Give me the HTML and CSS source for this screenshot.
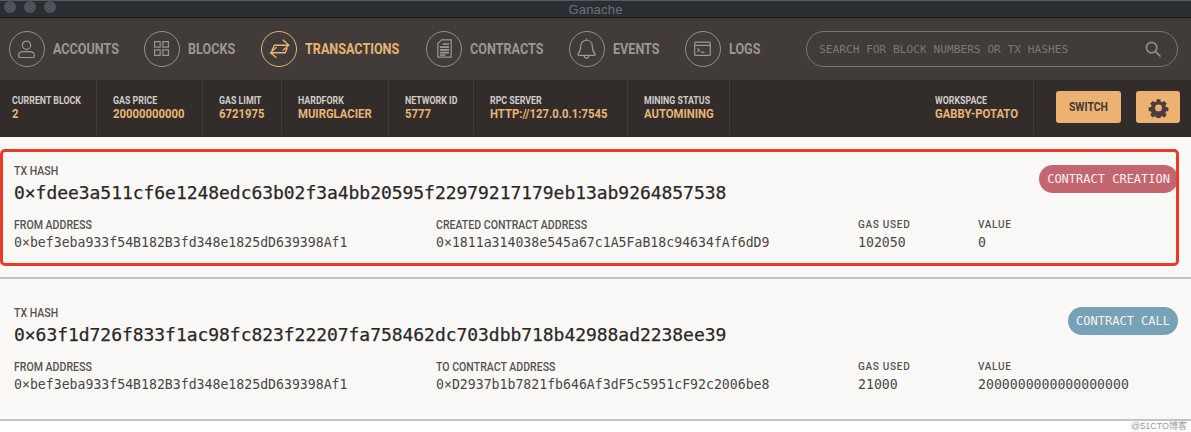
FILE: index.html
```html
<!DOCTYPE html>
<html lang="en">
<head>
<meta charset="utf-8">
<title>Ganache</title>
<link rel="stylesheet" href="styles.css">
</head>
<body>
<header class="titlebar">
  <div class="lights"><i></i><i></i><i></i></div>
  <div class="title">Ganache</div>
</header>
<nav class="nav">
  <a class="tab tab-accounts"><span class="ring"><svg viewBox="0 0 36 36"><circle cx="18" cy="14.400" r="4.500"/><path d="M9.500 26.500v-1.500c0-2.500 2.500-3.500 5-3.500h7c2.500 0 5 1 5 3.500v1.500c0 .8-.5 1.300-1.200 1.300H10.700c-.7 0-1.200-.5-1.200-1.300z"/></svg></span><span class="tab-text">ACCOUNTS</span></a>
  <a class="tab tab-blocks"><span class="ring"><svg viewBox="0 0 36 36"><rect x="10.500" y="10.500" width="6" height="6"/><rect x="19.500" y="10.500" width="6" height="6"/><rect x="10.500" y="19.500" width="6" height="6"/><rect x="19.500" y="19.500" width="6" height="6"/></svg></span><span class="tab-text">BLOCKS</span></a>
  <a class="tab tab-tx active"><span class="ring"><svg viewBox="0 0 36 36"><path d="M10.700 20.200l2.900-5.800h15.600M22.700 8.500l6.500 5.900-6.500 5.800M27.500 17.200l-2.200 5.500h-16M15.800 16.500l-6.500 6.200 6.500 5.500"/></svg></span><span class="tab-text">TRANSACTIONS</span></a>
  <a class="tab tab-contracts"><span class="ring"><svg viewBox="0 0 36 36"><path d="M16 8.500h10.400v19H11.800V12.500z"/><path class="doc-lines" d="M17 13h7M14 16.500h10M14 19.500h10M14 22.500h10M14 25h6"/></svg></span><span class="tab-text">CONTRACTS</span></a>
  <a class="tab tab-events"><span class="ring"><svg viewBox="0 0 36 36"><path d="M18 9c-4 0-6.300 3-6.300 6.500 0 4.500-1 6.500-3 8.500-.5.700 0 1.500.8 1.500h17c.8 0 1.300-.8.800-1.500-2-2-3-4-3-8.500C24.300 12 22 9 18 9zM18 9V7M15.500 26c0 1.500 1 2.500 2.500 2.500s2.500-1 2.500-2.500"/></svg></span><span class="tab-text">EVENTS</span></a>
  <a class="tab tab-logs"><span class="ring"><svg viewBox="0 0 36 36"><rect x="9.500" y="11" width="17" height="14.500" rx="1"/><path d="M9.500 14.500h17M12.500 18l2.200 1.800-2.200 1.800M16 22h4"/></svg></span><span class="tab-text">LOGS</span></a>
  <div class="search">
    <span>SEARCH FOR BLOCK NUMBERS OR TX HASHES</span>
    <svg viewBox="0 0 18 18"><circle cx="7" cy="7" r="5.500"/><path d="M11 11l5.500 5.500"/></svg>
  </div>
</nav>
<section class="status">
  <div class="cell cell-first"><label>CURRENT BLOCK</label><b>2</b></div>
  <div class="cell"><label>GAS PRICE</label><b>20000000000</b></div>
  <div class="cell"><label>GAS LIMIT</label><b>6721975</b></div>
  <div class="cell"><label>HARDFORK</label><b>MUIRGLACIER</b></div>
  <div class="cell"><label>NETWORK ID</label><b>5777</b></div>
  <div class="cell"><label>RPC SERVER</label><b>HTTP://127.0.0.1:7545</b></div>
  <div class="cell"><label>MINING STATUS</label><b>AUTOMINING</b></div>
  <div class="cell cell-work"><label>WORKSPACE</label><b>GABBY-POTATO</b></div>
  <div class="actions">
    <button class="btn btn-switch"><span class="btn-text">SWITCH</span></button>
    <button class="btn btn-gear"><svg viewBox="0 0 24 24"><path fill-rule="evenodd" d="M10 2.500h4l.6 2.800 1.500.7 2.500-1.500 2.800 2.800-1.500 2.500.6 1.500 2.800.7v4l-2.800.6-.6 1.500 1.500 2.500-2.800 2.800-2.500-1.500-1.500.6-.6 2.800h-4l-.6-2.800-1.500-.6-2.500 1.500-2.800-2.800 1.500-2.500-.6-1.500-2.800-.6v-4l2.800-.7.6-1.500-1.500-2.500 2.800-2.800 2.500 1.500 1.500-.7zM12 8.600a3.900 3.900 0 1 0 0 7.800 3.900 3.900 0 0 0 0-7.800z"/></svg></button>
  </div>
</section>
<main>
  <article class="tx tx-marked">
    <div class="mark"></div>
    <div class="tx-head">
      <div><label>TX HASH</label><div class="hash">0×fdee3a511cf6e1248edc63b02f3a4bb20595f22979217179eb13ab9264857538</div></div>
      <span class="badge badge-create">CONTRACT CREATION</span>
    </div>
    <div class="tx-grid">
      <div><label>FROM ADDRESS</label><div class="val">0×bef3eba933f54B182B3fd348e1825dD639398Af1</div></div>
      <div><label>CREATED CONTRACT ADDRESS</label><div class="val">0×1811a314038e545a67c1A5FaB18c94634fAf6dD9</div></div>
      <div><label class="mono">GAS USED</label><div class="val">102050</div></div>
      <div><label class="mono">VALUE</label><div class="val">0</div></div>
    </div>
  </article>
  <article class="tx">
    <div class="tx-head">
      <div><label>TX HASH</label><div class="hash">0×63f1d726f833f1ac98fc823f22207fa758462dc703dbb718b42988ad2238ee39</div></div>
      <span class="badge badge-call">CONTRACT CALL</span>
    </div>
    <div class="tx-grid">
      <div><label>FROM ADDRESS</label><div class="val">0×bef3eba933f54B182B3fd348e1825dD639398Af1</div></div>
      <div><label>TO CONTRACT ADDRESS</label><div class="val">0×D2937b1b7821fb646Af3dF5c5951cF92c2006be8</div></div>
      <div><label class="mono">GAS USED</label><div class="val">21000</div></div>
      <div><label class="mono">VALUE</label><div class="val">2000000000000000000</div></div>
    </div>
  </article>
</main>
<div class="watermark">@51CTO博客</div>
</body>
</html>
```
FILE: styles.css
```css
* { box-sizing: border-box; }
html, body { margin: 0; padding: 0; }
body { width: 1191px; height: 432px; overflow: hidden; background: #fff; position: relative; font-family: Roboto, sans-serif; color: #4a4644; }

.titlebar { height: 18px; background: #2a2d32; border-top: 1px solid #55585c; border-bottom: 1px solid #17191b; position: relative; display: flex; align-items: center; justify-content: center; }
.lights { position: absolute; left: 4px; top: 0; display: flex; gap: 8px; }
.lights i { width: 12px; height: 12px; border-radius: 50%; background: #50545a; }
.title { font: 13px "Liberation Sans", sans-serif; color: #6f7276; letter-spacing: .2px; }

.nav { height: 62px; background: #413c39; display: flex; align-items: center; padding-left: 9px; }
.tab { display: flex; align-items: center; gap: 8px; color: #9a9895; font: 700 15px Roboto, sans-serif; }
.tab-text { transform: scaleX(.84); transform-origin: left center; }
.tab-accounts { width: 135px; }
.tab-blocks { width: 117px; }
.tab-tx { width: 165px; }
.tab-contracts { width: 143px; }
.tab-events { width: 116px; }
.tab-logs { width: 121px; }
.ring { width: 36px; height: 36px; border: 1.500px solid #939290; border-radius: 50%; flex: none; display: block; }
.ring svg { display: block; width: 33px; height: 33px; fill: none; stroke: #9a9895; stroke-width: 1.300; }
.ring svg .doc-lines { stroke-width: 1.700; }
.active { color: #e8b473; }
.active .ring { border-color: #e8b473; }
.active .ring svg { stroke: #e8b473; stroke-width: 1.500; }
.search { width: 372px; height: 36px; border: 1.500px solid #7a7775; border-radius: 18px; display: flex; align-items: center; justify-content: space-between; padding: 0 15px 0 12px; color: #7a7876; font: 11.200px "DejaVu Sans Mono", monospace; }
.search svg { width: 17px; height: 17px; fill: none; stroke: #8f8e8c; stroke-width: 1.800; }

.status { height: 57px; background: #322d2b; display: grid; grid-template-columns: 97px 106px 79px 107px 85px 154px 102px 304px 1fr; align-items: stretch; }
.cell { border-right: 1px solid #413c39; padding: 15px 0 0 16px; margin-bottom: 2px; display: flex; flex-direction: column; }
.cell-first { padding-left: 12px; }
.cell-work { padding-left: 205px; }
.cell label { font: 700 10.500px/12px Roboto, sans-serif; color: #cfccc9; white-space: nowrap; transform: scaleX(.84); transform-origin: left center; }
.cell b { font: 700 13px/13px Roboto, sans-serif; color: #e8b473; white-space: nowrap; transform: scaleX(.87); transform-origin: left center; }
.actions { display: flex; gap: 15px; padding: 11px 0 0 22px; }
.btn { height: 32px; border: 0; border-radius: 3px; background: #ecb271; color: #403834; display: flex; align-items: center; justify-content: center; padding: 0; }
.btn-switch { width: 65px; font: 700 12px Roboto, sans-serif; }
.btn-text { display: block; transform: scaleX(.87); }
.btn-gear { width: 44px; }
.btn-gear svg { width: 21px; height: 21px; fill: #4a3e3e; }

main { display: block; }
.tx { height: 142px; background: #faf9f7; border-bottom: 2px solid #c4c3c1; padding: 27px 13px 0 14px; position: relative; }
.mark { position: absolute; left: 0; top: 11.500px; width: 1179px; height: 117px; border: 3px solid #ee3a24; border-radius: 5px; }
.tx label { display: block; font: 500 12px/14px Roboto, sans-serif; color: #58524f; white-space: nowrap; transform: scaleX(.88); transform-origin: left center; }
.tx label.mono { font: 500 10px/14px Roboto, sans-serif; letter-spacing: .7px; transform: none; }
.tx-head { display: flex; justify-content: space-between; align-items: flex-start; }
.hash { font: 18px/22px "DejaVu Sans Mono", monospace; letter-spacing: -.045px; color: #2b2725; -webkit-text-stroke: .25px #2b2725; margin-top: 4px; white-space: nowrap; }
.badge { height: 28px; margin-top: 1px; border-radius: 14px; color: #fbf3f1; font: 12px/28px "DejaVu Sans Mono", monospace; padding: 0 8px; white-space: nowrap; }
.badge-create { background: #c4666f; }
.badge-call { background: #76a2b8; }
.tx-grid { display: grid; grid-template-columns: 422px 422px 120px 1fr; margin-top: 14px; }
.val { font: 13.200px/18px "DejaVu Sans Mono", monospace; color: #4a4644; margin-top: 2px; white-space: nowrap; }

.watermark { position: absolute; right: 4px; bottom: 0; font: 9px/11px "Liberation Sans", "Noto Sans CJK SC", sans-serif; color: #9a9a9a; }
```
